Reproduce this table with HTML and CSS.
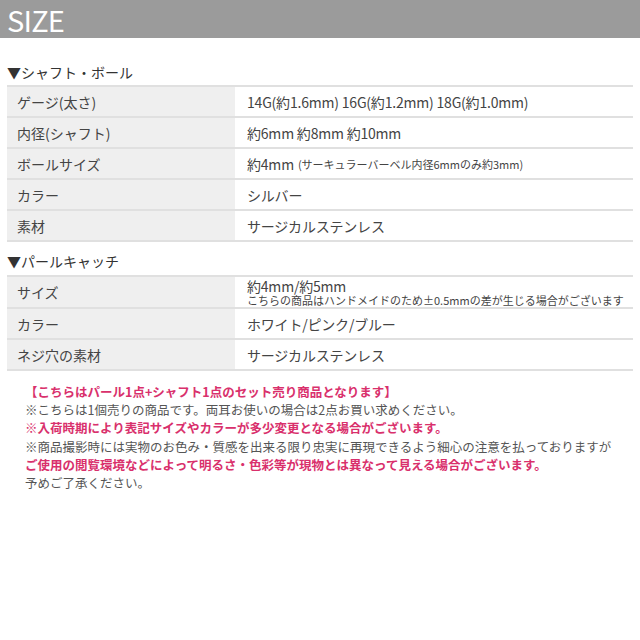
FILE: index.html
```html
<!DOCTYPE html>
<html lang="ja">
<head>
<meta charset="utf-8">
<link rel="stylesheet" href="styles.css">
</head>
<body>
<div class="header"><span class="header-text">SIZE</span></div>

<div class="section-title">▼シャフト・ボール</div>
<div class="spec">
  <div class="row"><div class="label">ゲージ(太さ)</div><div class="value">14G(約1.6mm) 16G(約1.2mm) 18G(約1.0mm)</div></div>
  <div class="row"><div class="label">内径(シャフト)</div><div class="value">約6mm 約8mm 約10mm</div></div>
  <div class="row"><div class="label">ボールサイズ</div><div class="value">約4mm <span class="small">(サーキュラーバーベル内径6mmのみ約3mm)</span></div></div>
  <div class="row"><div class="label">カラー</div><div class="value">シルバー</div></div>
  <div class="row"><div class="label">素材</div><div class="value">サージカルステンレス</div></div>
</div>

<div class="section-title second">▼パールキャッチ</div>
<div class="spec">
  <div class="row tall"><div class="label">サイズ</div><div class="value two"><span class="main">約4mm/約5mm</span><span class="sub">こちらの商品はハンドメイドのため±0.5mmの差が生じる場合がございます</span></div></div>
  <div class="row"><div class="label">カラー</div><div class="value">ホワイト/ピンク/ブルー</div></div>
  <div class="row"><div class="label">ネジ穴の素材</div><div class="value">サージカルステンレス</div></div>
</div>

<div class="notes">
  <p class="pink strong">【こちらはパール1点+シャフト1点のセット売り商品となります】</p>
  <p>※こちらは1個売りの商品です。両耳お使いの場合は2点お買い求めください。</p>
  <p class="pink">※入荷時期により表記サイズやカラーが多少変更となる場合がございます。</p>
  <p>※商品撮影時には実物のお色み・質感を出来る限り忠実に再現できるよう細心の注意を払っておりますが</p>
  <p class="pink">ご使用の閲覧環境などによって明るさ・色彩等が現物とは異なって見える場合がございます。</p>
  <p>予めご了承ください。</p>
</div>
</body>
</html>
```

FILE: styles.css
```css
html, body {
  margin: 0;
  padding: 0;
  background: #ffffff;
}
body {
  font-family: "Noto Sans CJK JP", "Noto Sans", sans-serif;
  color: #444444;
}
.header {
  height: 38px;
  background: #9b9b9b;
  display: flex;
  align-items: center;
  padding-left: 7px;
}
.header-text {
  color: #ffffff;
  font-size: 29px;
  line-height: 1;
  letter-spacing: -0.8px;
}
.section-title {
  margin: 24px 0 3px 7px;
  font-size: 14px;
  line-height: 20px;
  color: #333333;
}
.section-title.second {
  margin-top: 9px;
  margin-bottom: 4px;
}
.spec {
  margin: 0 7px 0 7px;
  width: 626px;
  border-bottom: 2px solid #e0e0e0;
}
.row {
  display: grid;
  grid-template-columns: 228px 1fr;
  border-top: 2px solid #e0e0e0;
  height: 29px;
}
.row.tall {
  height: 30px;
}
.label {
  background: #efefef;
  padding-left: 10px;
  font-size: 14px;
  display: flex;
  align-items: center;
  color: #444444;
}
.value {
  padding-left: 12px;
  font-size: 14px;
  letter-spacing: -0.2px;
  display: flex;
  align-items: center;
  white-space: nowrap;
}
.value .small {
  font-size: 11px;
  letter-spacing: 0;
  margin-left: 4px;
}
.value.two {
  flex-direction: column;
  align-items: flex-start;
  justify-content: center;
}
.value.two .main {
  font-size: 14px;
  line-height: 15px;
}
.value.two .sub {
  font-size: 11px;
  line-height: 12px;
  letter-spacing: 0;
}
.notes {
  margin-top: 12px;
  padding-left: 25px;
  font-size: 12.5px;
  line-height: 18.2px;
  color: #555555;
}
.notes p {
  margin: 0;
  white-space: nowrap;
}
.notes .pink {
  color: #d9306c;
  font-weight: 700;
}
```
